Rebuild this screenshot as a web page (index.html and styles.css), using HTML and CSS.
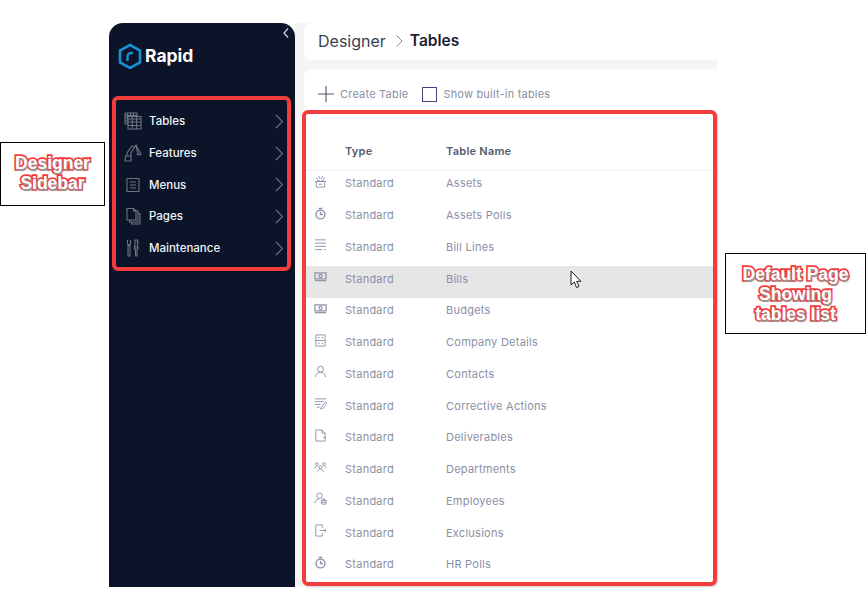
FILE: index.html
```html
<!DOCTYPE html>
<html lang="en">
<head>
<meta charset="utf-8">
<title>Designer - Tables</title>
<link rel="stylesheet" href="styles.css">
</head>
<body>
<div class="app">
  <aside class="sidebar">
    <svg class="collapse" width="8" height="12" viewBox="0 0 8 12"><path d="M6 1.500 2 6l4 4.500"/></svg>
    <div class="brand">
      <svg class="logo" width="24" height="27" viewBox="0 0 24 27"><path class="hex" d="M12 2 22 7.500v12L12 25 2 19.500v-12z"/><path class="r" d="M9.500 18v-4.500a3.500 3.500 0 0 1 3.500-3.500h2"/></svg>
      <span class="brand-name">Rapid</span>
    </div>
    <nav class="nav">
      <a class="nav-item">
        <svg class="nav-icon" viewBox="0 0 18 18"><path d="M1 1h12v3M1 1v11h3M1 3.500h12M1 6h3M1 9h3M3.500 1v11M6.500 1v3M9.500 1v3"/><path d="M4 4.500h13V17H4zM4 7h13M4 10h13M4 13.500h13M8.300 4.500V17M12.600 4.500V17"/></svg>
        <span class="nav-label">Tables</span>
        <svg class="nav-arrow" viewBox="0 0 9 15"><path d="M1 1l6.500 6.500L1 14"/></svg>
      </a>
      <a class="nav-item">
        <svg class="nav-icon" viewBox="0 0 18 18"><path d="M1 17l.5-5H7v5zM3 12V9l5-7 2.500 1.500L7 9v3M10.500 3.500 12 1l2 4 3 5-2 1-1-2-1 2M12 1l1 5 1 3"/></svg>
        <span class="nav-label">Features</span>
        <svg class="nav-arrow" viewBox="0 0 9 15"><path d="M1 1l6.500 6.500L1 14"/></svg>
      </a>
      <a class="nav-item">
        <svg class="nav-icon" viewBox="0 0 18 18"><path d="M3 2.500h12v13H3zM6 6h6M6 9h6M6 12h6"/></svg>
        <span class="nav-label">Menus</span>
        <svg class="nav-arrow" viewBox="0 0 9 15"><path d="M1 1l6.500 6.500L1 14"/></svg>
      </a>
      <a class="nav-item">
        <svg class="nav-icon" viewBox="0 0 18 18"><path d="M3 1.500h6.500L12 4v9H3zM9.500 1.500V4H12M12 4h2v11H5.500v-2M14 6.500h2V17H7.500v-2"/></svg>
        <span class="nav-label">Pages</span>
        <svg class="nav-arrow" viewBox="0 0 9 15"><path d="M1 1l6.500 6.500L1 14"/></svg>
      </a>
      <a class="nav-item">
        <svg class="nav-icon" viewBox="0 0 18 18"><path d="M3.500 1v4l1.500 1 1.500-1V1M4 6.500h2V17H4zM11 1h2.500v7H11zM10.500 8h3.500v2h-1v7h-1.500v-7h-1zM13.500 3H15"/></svg>
        <span class="nav-label">Maintenance</span>
        <svg class="nav-arrow" viewBox="0 0 9 15"><path d="M1 1l6.500 6.500L1 14"/></svg>
      </a>
    </nav>
  </aside>
  <main class="main">
    <header class="crumbs">
      <span class="crumb">Designer</span>
      <svg class="crumb-sep" width="9" height="14" viewBox="0 0 9 14"><path d="M1.500 1.500 7 7l-5.500 5.500"/></svg>
      <span class="crumb-current">Tables</span>
    </header>
    <section class="panel">
      <div class="toolbar">
        <svg class="plus" width="16" height="16" viewBox="0 0 16 16"><path d="M8 0v16M0 8h16"/></svg>
        <span class="tool-text create">Create Table</span>
        <span class="checkbox"></span>
        <span class="tool-text">Show built-in tables</span>
      </div>
      <div class="table">
        <div class="row head"><span></span><span>Type</span><span>Table Name</span></div>
        <div class="row">
          <svg class="ticon" viewBox="0 0 14 14"><path d="M2.500 7h9v6h-9zM1 7h12M5 10h4M3 5l4 2 4-2M5 1l1.500 3M9.500 1 8 4M2 3l2 1M12 3l-2 1"/></svg>
          <span>Standard</span><span>Assets</span>
        </div>
        <div class="row">
          <svg class="ticon bold" viewBox="0 0 14 14"><circle cx="7" cy="8" r="4.800"/><path d="M5 1.500h4M7 5v3h2.500"/></svg>
          <span>Standard</span><span>Assets Polls</span>
        </div>
        <div class="row">
          <svg class="ticon" viewBox="0 0 14 14"><path d="M1 2h12M1 5.500h12M1 9h12M1 12.500h8M11 12.500h2"/></svg>
          <span>Standard</span><span>Bill Lines</span>
        </div>
        <div class="row hover">
          <svg class="ticon bill" viewBox="0 0 14 14"><path d="M1 3h12v6.500H1zM1 11.500h12"/><circle cx="7" cy="6.200" r="1.700"/></svg>
          <span>Standard</span><span>Bills</span>
        </div>
        <div class="row">
          <svg class="ticon bill" viewBox="0 0 14 14"><path d="M1 3h12v6.500H1zM1 11.500h12"/><circle cx="7" cy="6.200" r="1.700"/></svg>
          <span>Standard</span><span>Budgets</span>
        </div>
        <div class="row">
          <svg class="ticon" viewBox="0 0 14 14"><path d="M2 1h10v12H2zM2 7h10M4 4h2M8 4h2M4 10h2M8 10h2"/></svg>
          <span>Standard</span><span>Company Details</span>
        </div>
        <div class="row">
          <svg class="ticon" viewBox="0 0 14 14"><circle cx="7" cy="4.500" r="3.200"/><path d="M1.500 13c.5-3.500 2.500-5 5.500-5s5 1.500 5.500 5"/></svg>
          <span>Standard</span><span>Contacts</span>
        </div>
        <div class="row">
          <svg class="ticon" viewBox="0 0 14 14"><path d="M1 2h12M1 5h9M1 8h6M3 11h3M12.500 5l-4 5-1.500 3 3-1 3.500-5z"/></svg>
          <span>Standard</span><span>Corrective Actions</span>
        </div>
        <div class="row">
          <svg class="ticon" viewBox="0 0 14 14"><path d="M2 1h6.500L12 4.500V13H2zM8.500 1v3.500H12M10 9h3"/></svg>
          <span>Standard</span><span>Deliverables</span>
        </div>
        <div class="row">
          <svg class="ticon" viewBox="0 0 14 14"><circle cx="3" cy="3.500" r="1.500"/><circle cx="11" cy="3.500" r="1.500"/><circle cx="7" cy="6.500" r="1.700"/><path d="M1 8c.2-1.300 1-2 2-2M13 8c-.2-1.300-1-2-2-2M4 11.500c.3-1.800 1.500-3 3-3s2.700 1.200 3 3"/></svg>
          <span>Standard</span><span>Departments</span>
        </div>
        <div class="row">
          <svg class="ticon" viewBox="0 0 14 14"><circle cx="6" cy="4" r="3"/><path d="M1 12c.3-3 2-4.500 4.500-4.500M8 9h5v4H8zM9.500 9V7.500h2V9M8 11h5"/></svg>
          <span>Standard</span><span>Employees</span>
        </div>
        <div class="row">
          <svg class="ticon" viewBox="0 0 14 14"><path d="M9 4V1H2v12h7v-3M6 7h7M11 5l2 2-2 2"/></svg>
          <span>Standard</span><span>Exclusions</span>
        </div>
        <div class="row">
          <svg class="ticon bold" viewBox="0 0 14 14"><circle cx="7" cy="8" r="4.800"/><path d="M5 1.500h4M7 5v3h2.500"/></svg>
          <span>Standard</span><span>HR Polls</span>
        </div>
      </div>
    </section>
  </main>
</div>
<div class="mark mark-sidebar"></div>
<div class="mark mark-table"></div>
<svg class="cursor" width="12" height="19" viewBox="0 0 12 19"><path d="M1 1v14l3.300-3 2.200 5.500 2.500-1-2.300-5.200H11z"/></svg>
<div class="callout callout-left">Designer<br>Sidebar</div>
<div class="callout callout-right">Default Page<br>Showing<br>tables list</div>
</body>
</html>
```
FILE: styles.css
```css
* { box-sizing: border-box; }
html, body { margin: 0; height: 100%; background: #fff; overflow: hidden; }
body { position: relative; font-family: Inter, "Noto Sans", "Liberation Sans", sans-serif; }

.app { display: flex; width: 608px; height: 564px; margin: 23px 0 0 109px; }

.sidebar { position: relative; flex: 0 0 186px; background: #0b1429; border-radius: 14px 14px 0 0; padding: 20px 0 0 9px; }
.collapse { position: absolute; top: 4px; right: 5px; fill: none; stroke: #c9ccd4; stroke-width: 1.300; }
.brand { display: flex; align-items: center; gap: 3px; height: 27px; }
.logo { fill: none; }
.logo .hex { stroke: #1b8fd0; stroke-width: 2.600; }
.logo .r { stroke: #1b8fd0; stroke-width: 2.400; }
.brand-name { color: #fff; font-size: 17.500px; font-weight: 700; margin-bottom: 2px; }

.nav { display: flex; flex-direction: column; margin-top: 36px; }
.nav-item { display: flex; align-items: center; height: 31.700px; padding: 0 0 1px 6px; color: #f2f3f6; font-size: 11.500px; font-weight: 500; }
.nav-icon { width: 18px; height: 18px; fill: none; stroke: #6e7380; stroke-width: 1.100; flex: none; }
.nav-label { margin-left: 7px; flex: 1; }
.nav-arrow { width: 9px; height: 15px; margin-right: 11px; fill: none; stroke: #6e7380; stroke-width: 1.100; flex: none; }

.main { flex: 1; display: flex; flex-direction: column; background: #f5f5f5; padding-left: 9px; min-width: 0; }
.crumbs { display: flex; align-items: center; height: 37px; background: #fff; border-radius: 8px 0 0 8px; padding: 0 0 2px 14px; }
.crumb { font-size: 16px; color: #3a3f50; }
.crumb-sep { margin: 0 6px 0 9px; fill: none; stroke: #8a8fa0; stroke-width: 1; }
.crumb-current { font-size: 15.500px; font-weight: 600; color: #1a1f33; }

.panel { flex: 1; margin-top: 9px; background: #fff; border-radius: 8px 0 0 0; min-height: 0; }
.toolbar { display: flex; align-items: center; height: 50px; padding-left: 14px; }
.plus { fill: none; stroke: #4e5364; stroke-width: 1.100; flex: none; }
.tool-text { font-size: 11px; color: #8a8fa6; letter-spacing: .2px; }
.create { margin: 0 14px 0 6px; }
.checkbox { width: 15px; height: 15px; border: 1.500px solid #4b3f7d; margin-right: 6px; flex: none; }

.table { margin: 0 0 0 2px; padding-top: 13px; }
.row { display: grid; grid-template-columns: 39px 101px 1fr; align-items: center; height: 31.750px; padding-bottom: 7px; font-size: 11px; color: #8a8fa6; letter-spacing: .25px; }
.head { height: 39px; padding-bottom: 0; border-bottom: 1px solid #eef0f3; color: #555b70; font-weight: 600; }
.hover { background: #e6e6e6; }
.ticon { width: 13px; height: 13px; margin: 0 0 4px 8px; fill: none; stroke: #8d92a6; stroke-width: 1; }
.bold { stroke-width: 1.500; }
.bill { stroke-width: 1.300; }

.mark { position: absolute; border: 4px solid #f33c3c; border-radius: 6px; pointer-events: none; box-shadow: 1px 1px 2px rgba(0, 0, 0, .2); }
.mark-sidebar { left: 112px; top: 96px; width: 179px; height: 175px; }
.mark-table { left: 302px; top: 110px; width: 415px; height: 476px; }

.cursor { position: absolute; left: 570px; top: 270px; fill: #fff; stroke: #222; stroke-width: 1; }

.callout { position: absolute; display: flex; align-items: center; justify-content: center; background: #fff; border: 1px solid #000; color: #fff; font-family: "Liberation Sans", Arial, sans-serif; font-weight: 700; text-align: center; line-height: 20px; font-size: 17.500px; -webkit-text-stroke: 3.500px #f33c3c; paint-order: stroke fill; text-shadow: 1px 2px 1px #999; }
.callout-left { left: 0; top: 142px; width: 105px; height: 64px; padding-bottom: 3px; }
.callout-right { left: 725px; top: 253px; width: 141px; height: 81px; }
```
